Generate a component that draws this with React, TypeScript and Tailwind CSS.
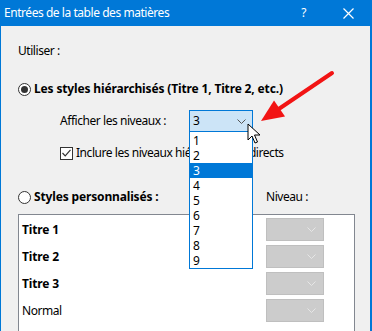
import React from "react";

const levels = ["1", "2", "3", "4", "5", "6", "7", "8", "9"];
const rows = [
  { label: "Titre 1", bold: true },
  { label: "Titre 2", bold: true },
  { label: "Titre 3", bold: true },
  { label: "Normal", bold: false },
];

function Radio({ checked }: { checked?: boolean }) {
  return (
    <span className="flex h-[13px] w-[13px] shrink-0 items-center justify-center rounded-full border border-[#333] bg-white">
      {checked && <span className="h-[7px] w-[7px] rounded-full bg-[#333]" />}
    </span>
  );
}

function Chevron({ color }: { color: string }) {
  return (
    <svg width="9" height="5" viewBox="0 0 9 5" className="shrink-0">
      <polyline points="0.5,0.5 4.5,4.5 8.5,0.5" fill="none" stroke={color} strokeWidth="1" />
    </svg>
  );
}

export default function App() {
  return (
    <div className="relative h-[331px] w-[372px] overflow-hidden border-l border-r-2 border-[#0078d7] bg-[#f0f0f0] text-[12px] leading-[16px] tracking-[-0.45px] text-black [font-family:'Noto_Sans',sans-serif]">
      <div className="flex h-[26px] items-center bg-[#0078d7] pl-[3px] text-white">
        <span>Entrées de la table des matières</span>
        <span className="ml-auto mr-[37px]">?</span>
        <svg width="11" height="11" viewBox="0 0 11 11" className="mr-[16px]">
          <path d="M0.5 0.5 L10.5 10.5 M10.5 0.5 L0.5 10.5" stroke="white" strokeWidth="1.2" />
        </svg>
      </div>

      <div className="pl-[17px]">
        <div className="mt-[17px]">Utiliser :</div>

        <div className="mt-[22px] flex items-center gap-[3px]">
          <Radio checked />
          <span className="font-bold tracking-[-0.15px]">Les styles hiérarchisés (Titre 1, Titre 2, etc.)</span>
        </div>

        <div className="mt-[13px] flex h-[22px] items-center">
          <span className="w-[171px] pl-[42px]">Afficher les niveaux :</span>
          <div className="relative z-10 h-[22px] w-[64px]">
            <div className="flex h-full items-center justify-between border border-[#0078d7] bg-[#cce4f7] pl-[3px] pr-[6px]">
              <span>3</span>
              <Chevron color="#555" />
            </div>
            <div className="absolute left-0 top-full h-[137px] w-[64px] border border-t-0 border-[#0078d7] bg-white pt-[1px]">
              {levels.map((l) => (
                <div
                  key={l}
                  className={`flex h-[15px] items-center pl-[3px] ${l === "3" ? "bg-[#0078d7] text-white" : ""}`}
                >
                  {l}
                </div>
              ))}
            </div>
          </div>
        </div>

        <div className="mt-[13px] flex items-center gap-[3px] pl-[42px]">
          <span className="flex h-[13px] w-[13px] shrink-0 items-center justify-center border border-[#333] bg-white">
            <svg width="9" height="8" viewBox="0 0 9 8">
              <polyline points="0.5,4 3.2,6.8 8.5,0.8" fill="none" stroke="#333" strokeWidth="1.2" />
            </svg>
          </span>
          <span className="whitespace-nowrap">Inclure les niveaux hiérarchiques directs</span>
        </div>

        <div className="mt-[28px] flex items-center">
          <Radio />
          <span className="ml-[3px] w-[232px] font-bold tracking-[-0.15px]">Styles personnalisés :</span>
          <span>Niveau :</span>
        </div>

        <div className="mt-[9px] h-[140px] w-[337px] border border-[#828790] bg-white pl-[3px] pt-[3px]">
          {rows.map((r) => (
            <div key={r.label} className="mb-[4px] flex h-[23px] items-center">
              <span className={`w-[244px] ${r.bold ? "font-bold tracking-[-0.15px]" : ""}`}>{r.label}</span>
              <div className="flex h-[23px] w-[58px] items-center justify-end border border-[#bfbfbf] bg-[#cccccc] pr-[7px]">
                <Chevron color="#e6e6e6" />
              </div>
            </div>
          ))}
        </div>
      </div>

      <svg className="pointer-events-none absolute left-0 top-0 z-20" width="372" height="331">
        <line x1="331" y1="73" x2="277" y2="109.5" stroke="#f21414" strokeWidth="4" strokeLinecap="round" />
        <polygon points="260,121 273,100.5 284,116.5" fill="#f21414" />
        <path
          d="M247 124 L247 140 L251 136 L254 143 L256.5 142 L253.5 135 L259 135 Z"
          fill="white"
          stroke="black"
          strokeWidth="1"
          strokeLinejoin="round"
        />
      </svg>
    </div>
  );
}
